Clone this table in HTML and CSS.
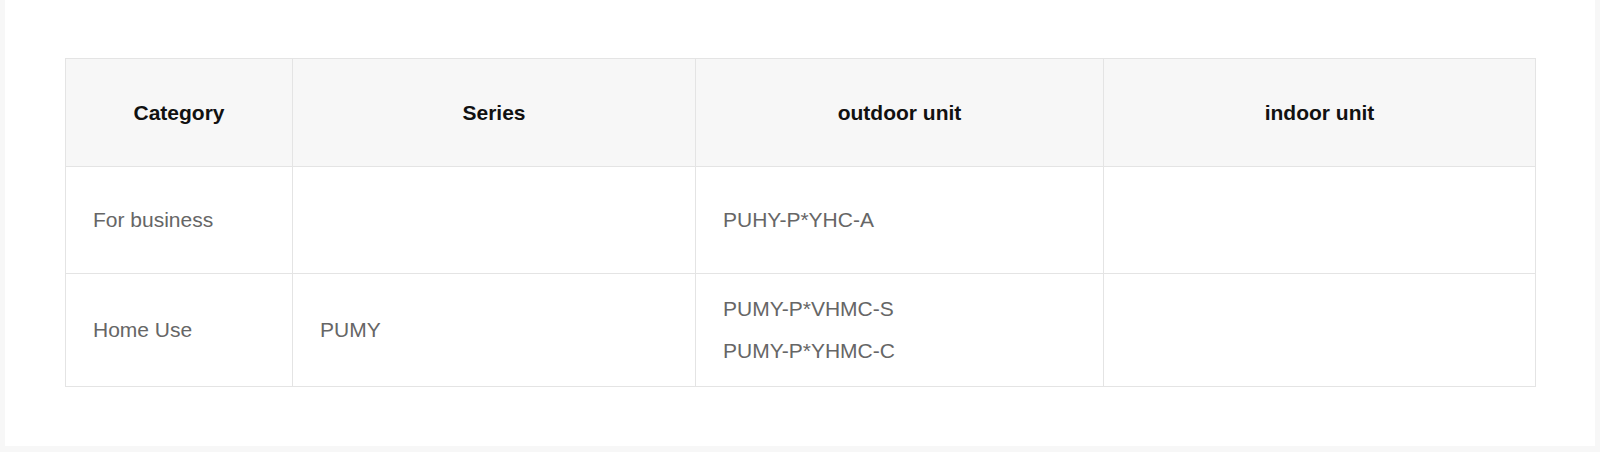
FILE: index.html
```html
<!DOCTYPE html>
<html>
<head>
<meta charset="UTF-8">
<title>Models</title>
<link rel="stylesheet" href="styles.css">
</head>
<body>
	<div class="panel">
		<table class="models">
			<colgroup>
				<col class="c1">
				<col class="c2">
				<col class="c3">
				<col class="c4">
			</colgroup>
			<thead>
				<tr>
					<th>Category</th>
					<th>Series</th>
					<th>outdoor unit</th>
					<th>indoor unit</th>
				</tr>
			</thead>
			<tbody>
				<tr class="row1">
					<td>For business</td>
					<td></td>
					<td><p>PUHY-P*YHC-A</p></td>
					<td></td>
				</tr>
				<tr class="row2">
					<td>Home Use</td>
					<td>PUMY</td>
					<td>
						<p>PUMY-P*VHMC-S</p>
						<p>PUMY-P*YHMC-C</p>
					</td>
					<td></td>
				</tr>
			</tbody>
		</table>
	</div>
</body>
</html>
```

FILE: styles.css
```css
* {
	margin: 0;
	padding: 0;
	box-sizing: border-box;
}
body {
	background-color: #f7f7f7;
	font-family: "Liberation Sans", Arial, sans-serif;
	font-size: 21px;
}
.panel {
	margin-left: 5px;
	width: 1590px;
	height: 446px;
	background-color: #fff;
	padding: 58px 0 0 60px;
}
.models {
	width: 1470px;
	border-collapse: collapse;
	table-layout: fixed;
}
.models col.c1 { width: 227px; }
.models col.c2 { width: 403px; }
.models col.c3 { width: 408px; }
.models col.c4 { width: 432px; }
.models th,
.models td {
	border: 1px solid #e4e4e4;
	vertical-align: middle;
}
.models th {
	background-color: #f7f7f7;
	color: #111;
	font-weight: bold;
	text-align: center;
	height: 108px;
}
.models td {
	color: #666;
	text-align: left;
	padding: 14px 20px 14px 27px;
}
.models p {
	line-height: 42px;
}
.row1 td {
	height: 107px;
}
.row2 td {
	height: 113px;
}
```
